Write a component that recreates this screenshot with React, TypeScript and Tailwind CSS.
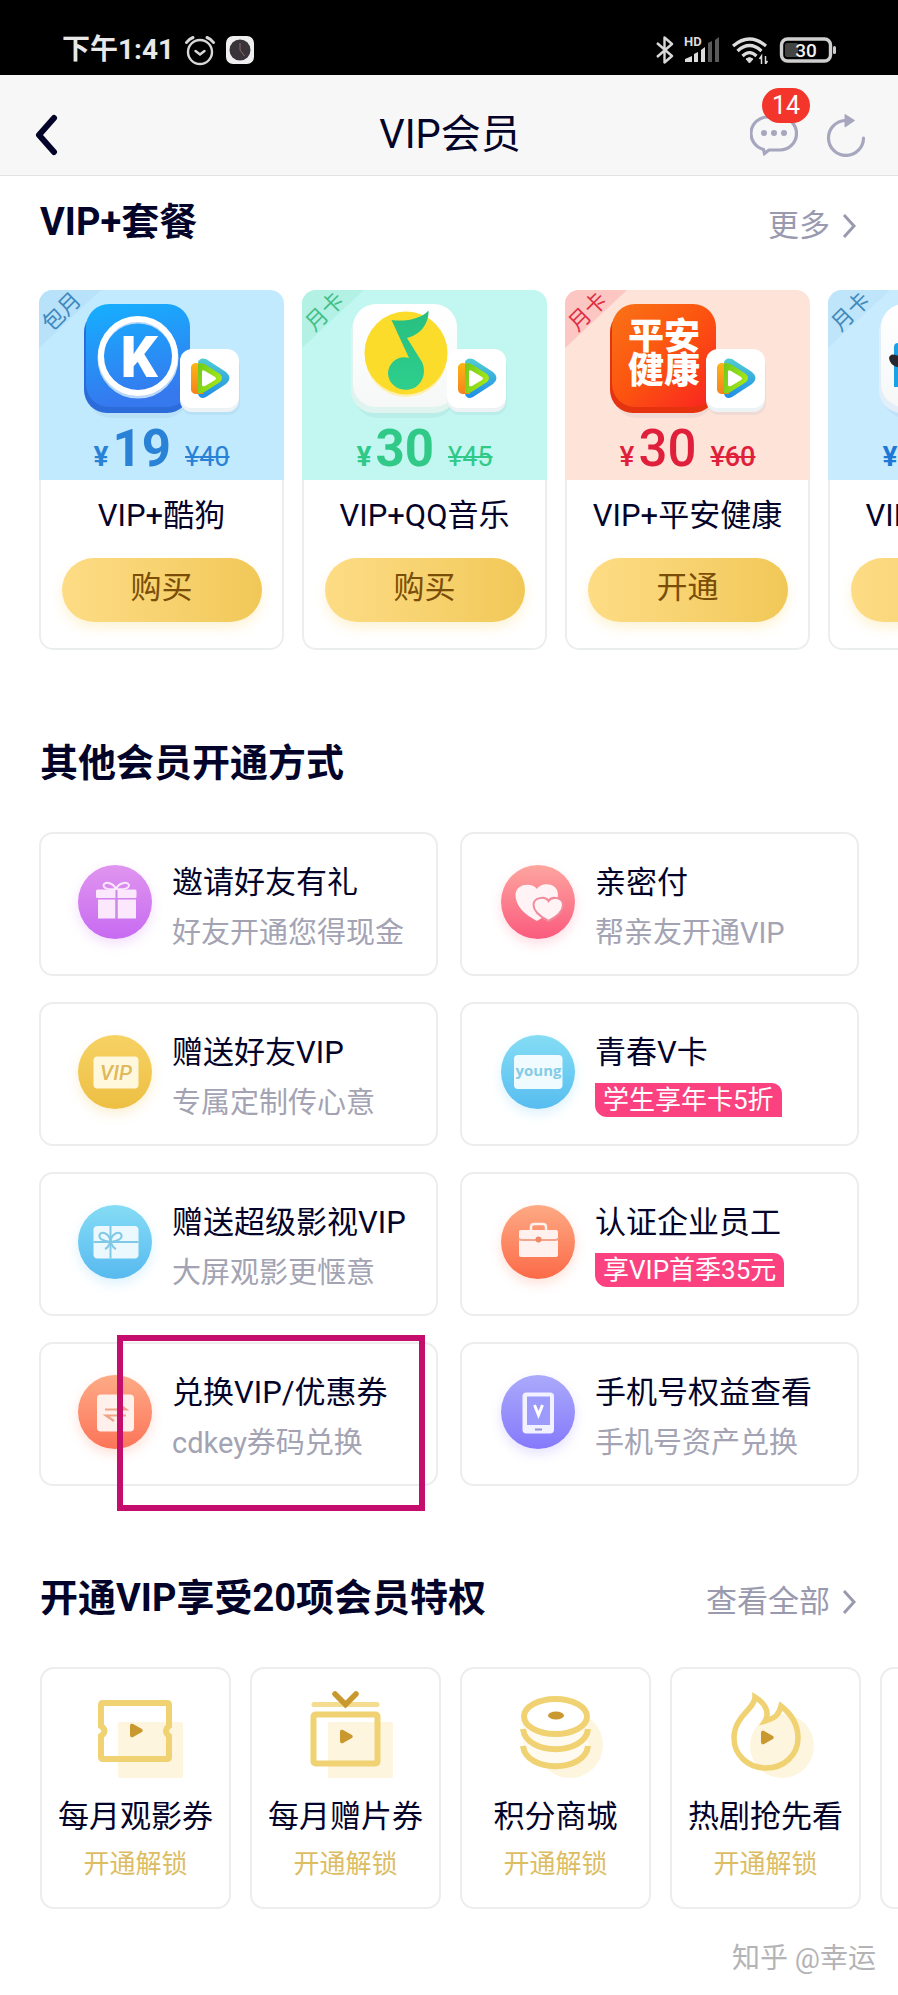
import React from "react";
import clsx from "clsx";

type Plan = {
  name: string;
  ribbon: string;
  price: string;
  oldPrice: string;
  action: string;
  tint: string;
  ribbonTint: string;
  ribbonInk: string;
  ink: string;
  weight: string;
  logo: React.ReactNode;
};

type Method = {
  title: string;
  desc?: string;
  promo?: string;
  icon: React.ReactNode;
  marked?: boolean;
};

type Privilege = { name: string; icon: React.ReactNode };

/* ---------- status bar ---------- */

function StatusBar() {
  return (
    <div className="flex h-[75px] items-center justify-between bg-black pt-6 pr-[61px] pl-[62px] text-[#e8e8e8]">
      <div className="flex items-center gap-[10px]">
        <span className="text-[28px] leading-8 font-bold">下午1:41</span>
        <svg width="32" height="32" viewBox="0 0 32 32" fill="none" stroke="#d8d8d8" strokeWidth="2.4" strokeLinecap="round">
          <circle cx="16" cy="18" r="12" />
          <path d="M11.500 17l4.500 3.500 4.500-3.500" />
          <path d="M2.500 8.500Q5 5 9 3.500M29.500 8.500Q27 5 23 3.500" strokeWidth="3" />
        </svg>
        <svg width="28" height="28" viewBox="0 0 28 28">
          <rect width="28" height="28" rx="7" fill="#efefef" />
          <circle cx="14" cy="14" r="10.5" fill="#38343a" />
          <path d="M14 7v7l4.500 6" stroke="#8a6a68" strokeWidth="1" fill="none" />
        </svg>
      </div>
      <div className="flex items-center gap-[10px]">
        <svg width="18" height="28" viewBox="0 0 18 28" fill="none" stroke="#d8d8d8" strokeWidth="2.4" strokeLinejoin="round">
          <path d="M1 7l15 13-7.500 6.500V1.500L16 8 1 21" />
        </svg>
        <svg width="37" height="28" viewBox="0 0 37 28" className="overflow-visible" fill="#dcdcdc">
          <text x="0" y="10" fontSize="13" fontWeight="700" fontFamily="Roboto">HD</text>
          <path d="M1 26v-3l7-3v6zM10 26v-8l4-2v10zM17 26V14l4-3v15z" />
          <path d="M24 26V7l4-2v21zM31 26V4l4-3v25z" fill="#5a5a5a" />
        </svg>
        <svg width="38" height="28" viewBox="0 0 38 28" fill="none" stroke="#dcdcdc" strokeWidth="3.2">
          <path d="M2 10Q18.500-4 35 10M6.500 15Q18.500 4 30.500 15M11.500 20Q18.500 13 25.500 20" />
          <path d="M15 23q3.500-3 7 0l-3.500 4z" fill="#dcdcdc" strokeWidth="1" />
          <path d="M30.500 28v-8l-2 3M34.500 20v8l2-3" strokeWidth="1.500" />
        </svg>
        <svg width="58" height="28" viewBox="0 0 58 28">
          <rect x="2.500" y="3" width="49" height="22" rx="6" fill="none" stroke="#cfcfcf" strokeWidth="3.4" />
          <rect x="6" y="7" width="13" height="14" rx="2" fill="#444" />
          <rect x="54" y="10" width="3" height="8" rx="1.500" fill="#cfcfcf" />
          <text x="27" y="20.500" fontSize="19" fontWeight="500" textAnchor="middle" fill="#f2f2f2" fontFamily="Roboto">30</text>
        </svg>
      </div>
    </div>
  );
}

function NavBar() {
  return (
    <header className="grid h-[101px] grid-cols-[1fr_auto_1fr] items-center border-b border-[#e2e2e4] bg-[#f7f7f7] pt-5 pr-8 pl-[34px]">
      <button type="button" aria-label="返回" className="justify-self-start">
        <svg width="26" height="42" viewBox="0 0 26 42" fill="none" stroke="#04042a" strokeWidth="6" strokeLinecap="round" strokeLinejoin="round">
          <path d="M20 4L5 21l15 17" />
        </svg>
      </button>
      <h1 className="text-[40px] leading-[44px]">VIP会员</h1>
      <div className="flex items-center gap-7 justify-self-end">
        <button type="button" aria-label="消息" className="relative">
          <svg width="48" height="42" viewBox="0 0 48 42" fill="none">
            <path d="M18 3h12a16.500 16.500 0 0 1 0 33H19l-4.500 3.500L13.500 35.500A16.500 16.500 0 0 1 18 3z" stroke="#a6a6be" strokeWidth="3.200" />
            <g fill="#a6a6be">
              <circle cx="14" cy="19" r="3" />
              <circle cx="24" cy="19" r="3" />
              <circle cx="34" cy="19" r="3" />
            </g>
          </svg>
          <span className="absolute -top-[26px] left-3 flex h-[35px] w-12 items-center justify-center rounded-full bg-[#f4352b] text-[25px] text-white">
            14
          </span>
        </button>
        <button type="button" aria-label="刷新">
          <svg width="40" height="44" viewBox="0 0 40 44" fill="none">
            <path d="M37.500 25A17.500 17.500 0 1 1 19 7.500" stroke="#a6a6be" strokeWidth="3.200" strokeLinecap="round" />
            <path d="M19 1.500v12.500l9.500-6.500z" fill="#a6a6be" stroke="#a6a6be" strokeLinejoin="round" />
          </svg>
        </button>
      </div>
    </header>
  );
}

function SectionHead({ title, more }: { title: string; more?: string }) {
  return (
    <div className="flex h-11 items-center justify-between px-10">
      <h2 className="text-[38px] leading-[44px] font-bold">{title}</h2>
      {more && (
        <a href="#" className="flex items-center gap-3 pt-2 text-[31px] leading-[44px] text-[#9a9aae]">
          {more}
          <svg width="16" height="26" viewBox="0 0 16 26" fill="none" stroke="currentColor" strokeWidth="3">
            <path d="M2 2l10 11L2 24" />
          </svg>
        </a>
      )}
    </div>
  );
}

/* ---------- package cards ---------- */

// Rounded app tile plus the small video badge that overlaps its corner
function AppArt({ children, face, depth, shift = 0 }: { children: React.ReactNode; face: string; depth: string; shift?: number }) {
  return (
    <svg width="156" height="116" viewBox="0 0 156 116" className="overflow-visible" aria-hidden="true">
      <defs>
        <linearGradient id="kugou" x1="0" y1="0" x2="0.200" y2="1">
          <stop offset="0" stopColor="#15b0ff" />
          <stop offset="1" stopColor="#3678ee" />
        </linearGradient>
        <linearGradient id="pingan" x1="0" y1="0" x2="1" y2="1">
          <stop offset="0" stopColor="#f97316" />
          <stop offset="0.500" stopColor="#fc5310" />
          <stop offset="1" stopColor="#f92222" />
        </linearGradient>
        <linearGradient id="paper" x1="0" y1="0" x2="0" y2="1">
          <stop offset="0" stopColor="#ffffff" />
          <stop offset="1" stopColor="#f6f8f8" />
        </linearGradient>
        <linearGradient id="play-blue" x1="0" y1="0" x2="0" y2="1">
          <stop offset="0" stopColor="#52cdd2" />
          <stop offset="1" stopColor="#1e8ee8" />
        </linearGradient>
        <linearGradient id="play-orange" x1="0" y1="0" x2="0" y2="1">
          <stop offset="0" stopColor="#fdb515" />
          <stop offset="1" stopColor="#f5821e" />
        </linearGradient>
        <linearGradient id="play-green" x1="0" y1="0" x2="1" y2="0.400">
          <stop offset="0" stopColor="#6fca1c" />
          <stop offset="1" stopColor="#a5e616" />
        </linearGradient>
        <linearGradient id="note" x1="0" y1="0" x2="0" y2="1">
          <stop offset="0" stopColor="#27bf80" />
          <stop offset="1" stopColor="#2ecf8e" />
        </linearGradient>
      </defs>
      <g transform={`translate(${shift} 0)`}>
        <rect x="3" y="12" width="102" height="104" rx="24" fill="#35598b" opacity="0.060" />
        <rect x="0" y="7" width="106" height="104" rx="23" fill={depth} />
        <rect x="2" y="2" width="104" height="103" rx="23" fill={face} />
        {children}
        <rect x="97" y="53" width="59" height="60" rx="12" fill="#35598b" opacity="0.060" />
        <rect x="96" y="50" width="59" height="60" rx="12" fill="#edf3f4" />
        <rect x="96" y="47" width="59" height="59" rx="12" fill="#fff" />
        <path d="M114 60q2-5 8-3l20 13q7 6 0 12l-20 13q-6 3-8-3z" fill="url(#play-blue)" />
        <path d="M107 65q1-4 5-4l7 1v30h-7q-4 0-5-4z" fill="url(#play-orange)" />
        <path d="M114 62q4-2 8 1l14 9q4 4 0 8l-14 9q-4 3-8 2z" fill="url(#play-green)" />
        <path d="M118 70q0-3 3-1l10 6q2 1.500 0 3l-10 6q-3 1-3-1z" fill="#fff" />
      </g>
    </svg>
  );
}

const kugou = (
  <AppArt face="url(#kugou)" depth="#2b6cda">
    <circle cx="54" cy="56" r="37.500" fill="none" stroke="#b9d8fb" strokeWidth="6" />
    <circle cx="54" cy="54" r="37" fill="none" stroke="#fff" strokeWidth="6" />
    <text x="55" y="75" fontSize="58" fontWeight="900" textAnchor="middle" fill="#fff" fontFamily="Roboto">K</text>
  </AppArt>
);

const qqMusic = (
  <AppArt face="url(#paper)" depth="#dff4ef" shift={4}>
    <circle cx="55" cy="54" r="41" fill="#fdf0b2" />
    <circle cx="55" cy="51" r="41.500" fill="#fbdc2a" />
    <path
      d="M40.500 18C54 20 70 17 77.500 8.500 78 22 69 33 56 36L71 60C76 71 71 82 63 86 52 91 38 85 37 72 37 61 47 53 58 56z"
      fill="url(#note)"
    />
  </AppArt>
);

const pingan = (
  <AppArt face="url(#pingan)" depth="#e5330f">
    <g fontSize="36" fontWeight="900" fill="#fff" fontFamily="Noto Sans CJK SC">
      <text x="18" y="47">平安</text>
      <text x="18" y="81">健康</text>
    </g>
  </AppArt>
);

const qqReader = (
  <AppArt face="url(#paper)" depth="#e2eef8" shift={6}>
    <path d="M15 45q0-4 4-4h56v44H15z" fill="#1ba2e6" />
    <path d="M10 56q1-5 7-3l8 3-2 10q-12-1-13-10z" fill="#26282e" />
  </AppArt>
);

const plans: Plan[] = [
  { name: "VIP+酷狗", ribbon: "包月", price: "19", oldPrice: "40", action: "购买", tint: "bg-[#c1eafe]", ribbonTint: "#b7e2fa", ribbonInk: "text-[#3f87bd]", ink: "text-[#2a82d6]", weight: "font-bold", logo: kugou },
  { name: "VIP+QQ音乐", ribbon: "月卡", price: "30", oldPrice: "45", action: "购买", tint: "bg-[#c1f7f0]", ribbonTint: "#b4f1e5", ribbonInk: "text-[#42bf86]", ink: "text-[#30c988]", weight: "font-bold", logo: qqMusic },
  { name: "VIP+平安健康", ribbon: "月卡", price: "30", oldPrice: "60", action: "开通", tint: "bg-[#fee3d9]", ribbonTint: "#fcc6c2", ribbonInk: "text-[#dd3044]", ink: "text-[#e01f3a]", weight: "font-medium", logo: pingan },
  { name: "VIP+QQ阅读", ribbon: "月卡", price: "30", oldPrice: "45", action: "购买", tint: "bg-[#c9ebfe]", ribbonTint: "#bfe5fb", ribbonInk: "text-[#4089bb]", ink: "text-[#1d78d8]", weight: "font-bold", logo: qqReader },
];

function PlanCard({ plan }: { plan: Plan }) {
  return (
    <article className="relative h-[360px] w-[245px] shrink-0 overflow-hidden rounded-[14px] bg-white">
      <div className={clsx("flex h-[190px] flex-col items-center pt-3", plan.tint, plan.ink)}>
        <svg className="absolute top-0 left-0" width="62" height="58" viewBox="0 0 62 58">
          <path d="M0 0h62L0 58z" fill={plan.ribbonTint} />
        </svg>
        <span className={clsx("absolute top-3 left-px -rotate-45 text-[22px] leading-5", plan.ribbonInk)}>{plan.ribbon}</span>
        {plan.logo}
        <p className={clsx("mt-[6px] flex items-baseline text-[51px] leading-[50px]", plan.weight)}>
          <span className="mr-1 text-[28px]">¥</span>
          {plan.price}
          <s className={clsx("ml-[14px] text-[27px]", plan.weight === "font-medium" ? "font-medium" : "font-normal")}>
            ¥{plan.oldPrice}
          </s>
        </p>
      </div>
      <div className="flex h-[170px] flex-col items-center rounded-b-[14px] border-2 border-t-0 border-[#ebeeef] pt-[14px]">
        <h3 className="text-[31px] leading-[44px] whitespace-nowrap">{plan.name}</h3>
        <button
          type="button"
          className="mt-5 h-16 w-[200px] rounded-full bg-linear-to-r from-[#fddc85] to-[#f1c857] pb-1 text-[31px] leading-[44px] text-[#7a4e08] shadow-[0_6px_12px_rgba(250,215,120,0.3)]"
        >
          {plan.action}
        </button>
      </div>
    </article>
  );
}

/* ---------- other ways to subscribe ---------- */

function Disc({ id, from, to, glow, children }: { id: string; from: string; to: string; glow: string; children: React.ReactNode }) {
  return (
    <span className={clsx("shrink-0 rounded-full", glow)}>
      <svg width="74" height="74" viewBox="0 0 74 74" aria-hidden="true">
        <defs>
          <linearGradient id={id} x1="0" y1="0" x2="0" y2="1">
            <stop offset="0" stopColor={from} />
            <stop offset="1" stopColor={to} />
          </linearGradient>
        </defs>
        <circle cx="37" cy="37" r="37" fill={`url(#${id})`} />
        {children}
      </svg>
    </span>
  );
}

const methods: Method[] = [
  {
    title: "邀请好友有礼",
    desc: "好友开通您得现金",
    icon: (
      <Disc id="d-gift" from="#e095ee" to="#c76af2" glow="shadow-[0_5px_12px_rgba(200,110,240,0.22)]">
        <g fill="#fbe8fd">
          <rect x="18" y="24.500" width="40.500" height="8.500" rx="1.500" />
          <path d="M20 34.500h17.500v19H20zM39.500 34.500h18.500v19H39.500z" />
        </g>
        <path d="M38 24q-12 1-12.500-3.500c0-4 9-4 12.500 3.500 3.500-7.500 13-7.500 13-3.500Q50.500 25 38 24z" fill="none" stroke="#fbe8fd" strokeWidth="2" />
        <path d="M38.500 25v28.500" stroke="#c98ae0" strokeWidth="2" />
      </Disc>
    ),
  },
  {
    title: "亲密付",
    desc: "帮亲友开通VIP",
    icon: (
      <Disc id="d-heart" from="#fda59f" to="#fb5a7d" glow="shadow-[0_5px_12px_rgba(250,100,130,0.22)]">
        <path d="M36 24c4-7 21-7 21 6 0 10-10 20-21 26C24 50 14.500 41 14.500 30c0-12 17-13 21.500-6z" fill="#fff3f5" />
        <path d="M47.500 36c3-5 14.500-4 14.500 4 0 7-7 12-14.500 16C40 52 32.500 47 32.500 40c0-8 12-9 15-4z" fill="#fff3f5" stroke="#f08a9c" strokeWidth="2" />
      </Disc>
    ),
  },
  {
    title: "赠送好友VIP",
    desc: "专属定制传心意",
    icon: (
      <Disc id="d-vip" from="#f6d264" to="#edbf43" glow="shadow-[0_5px_12px_rgba(240,195,80,0.25)]">
        <rect x="15.500" y="21.500" width="45" height="32" rx="4" fill="#fff8dd" />
        <text x="38" y="45" fontSize="21" fontWeight="500" fontStyle="italic" textAnchor="middle" fill="#dfb95c" fontFamily="Roboto">VIP</text>
      </Disc>
    ),
  },
  {
    title: "青春V卡",
    promo: "学生享年卡5折",
    icon: (
      <Disc id="d-young" from="#84ddf4" to="#57bdf0" glow="shadow-[0_5px_12px_rgba(95,195,240,0.22)]">
        <rect x="13" y="20" width="48.500" height="34" rx="4" fill="#effbff" />
        <text x="37.500" y="41" fontSize="15" fontWeight="700" textAnchor="middle" fill="#84cbe5" fontFamily="Open Sans">young</text>
      </Disc>
    ),
  },
  {
    title: "赠送超级影视VIP",
    desc: "大屏观影更惬意",
    icon: (
      <Disc id="d-box" from="#85dcf5" to="#57b9ef" glow="shadow-[0_5px_12px_rgba(95,195,240,0.22)]">
        <rect x="15.500" y="21" width="45" height="32.500" rx="4" fill="#ebf9fe" />
        <g fill="none" stroke="#80c9e6" strokeWidth="2">
          <path d="M32.500 21v32.500M15.500 37h45" />
          <path d="M32.500 37c-7-1-12-3-11-7s10-3 11 7zM32.500 37c7-1 12-3 11-7s-10-3-11 7zM32 37q-1 5-5 7M33 37q1 5 5 7" />
        </g>
      </Disc>
    ),
  },
  {
    title: "认证企业员工",
    promo: "享VIP首季35元",
    icon: (
      <Disc id="d-case" from="#fdaa84" to="#fc6a48" glow="shadow-[0_5px_12px_rgba(250,120,80,0.22)]">
        <path d="M30 26v-4q0-3 3-3h9q3 0 3 3v4" fill="none" stroke="#fff1ed" strokeWidth="2.500" />
        <rect x="18" y="25" width="39" height="27" rx="2" fill="#fff1ed" />
        <path d="M18 33q0 2 3 2h33q3 0 3-2" fill="none" stroke="#f3a48a" strokeWidth="2" />
        <circle cx="37.500" cy="34.500" r="3" fill="#ee8868" />
      </Disc>
    ),
  },
  {
    title: "兑换VIP/优惠券",
    desc: "cdkey券码兑换",
    marked: true,
    icon: (
      <Disc id="d-swap" from="#fdab87" to="#fc7458" glow="shadow-[0_5px_12px_rgba(250,120,80,0.22)]">
        <rect x="19" y="19.500" width="37" height="37" rx="4" fill="#fff0eb" />
        <path d="M27 34.500h21l-6-4.500M48 40.500H28l8 5.500" fill="none" stroke="#f2a286" strokeWidth="2.200" />
      </Disc>
    ),
  },
  {
    title: "手机号权益查看",
    desc: "手机号资产兑换",
    icon: (
      <Disc id="d-phone" from="#aaaafb" to="#8579fb" glow="shadow-[0_5px_12px_rgba(135,125,250,0.22)]">
        <rect x="21.500" y="17.500" width="31.500" height="41" rx="4" fill="#f1f1ff" />
        <rect x="26" y="21.500" width="23" height="28.500" fill="#9c9afb" />
        <path d="M33.500 30l4 10 4-10" fill="none" stroke="#fff" strokeWidth="3" />
        <path d="M34 54.500h7" stroke="#9693d8" strokeWidth="2" />
      </Disc>
    ),
  },
];

function MethodCard({ method }: { method: Method }) {
  return (
    <a
      href="#"
      className="relative flex h-36 items-center gap-5 rounded-[14px] border-2 border-[#ededed] bg-white pb-1 pl-[37px] even:pl-[39px]"
    >
      {method.icon}
      <span className="flex flex-col items-start pt-[10px]">
        <span className="text-[31px] leading-[44px] whitespace-nowrap">{method.title}</span>
        {method.desc && <span className="mt-2 text-[29px] leading-10 whitespace-nowrap text-[#a3a3b3]">{method.desc}</span>}
        {method.promo && (
          <span className="mt-2 mb-[6px] rounded-tr-[10px] rounded-bl-[12px] bg-[#fb417f] px-2 text-[26px] leading-[34px] whitespace-nowrap text-white">
            {method.promo}
          </span>
        )}
      </span>
      {method.marked && (
        <span className="pointer-events-none absolute -top-[9px] left-[76px] h-44 w-[308px] border-[6px] border-[#c40d6c]" />
      )}
    </a>
  );
}

/* ---------- privileges ---------- */

const GOLD = "#f0d272";
const DARK_GOLD = "#c9982f";
const PALE = "#fdf5de";

function Play({ x, y }: { x: number; y: number }) {
  return (
    <path
      transform={`translate(${x} ${y})`}
      d="M2 3q0-2 2-1l8 4.500q1.500 1 0 2L4 13q-2 1-2-1z"
      fill={DARK_GOLD}
      stroke={DARK_GOLD}
      strokeWidth="2"
      strokeLinejoin="round"
    />
  );
}

const privileges: Privilege[] = [
  {
    name: "每月观影券",
    icon: (
      <>
        <rect x="32" y="37" width="65" height="56" rx="2" fill={PALE} />
        <path
          d="M17 18h64q2 0 2 2v21q-6 5 0 10v21q0 2-2 2H17q-2 0-2-2V51q7-5 0-10V20q0-2 2-2z"
          fill="none"
          stroke={GOLD}
          strokeWidth="6"
        />
        <Play x={43} y={38} />
      </>
    ),
  },
  {
    name: "每月赠片券",
    icon: (
      <>
        <rect x="32" y="37" width="65" height="56" rx="2" fill={PALE} />
        <path d="M18 19.500h63" stroke="#f4dc90" strokeWidth="5" strokeLinecap="round" />
        <rect x="17.500" y="29.500" width="64" height="49" rx="2" fill="none" stroke={GOLD} strokeWidth="6" />
        <path d="M39 9l10.500 10.500L60 9" fill="none" stroke={DARK_GOLD} strokeWidth="5.500" strokeLinecap="round" />
        <Play x={43} y={44} />
      </>
    ),
  },
  {
    name: "积分商城",
    icon: (
      <>
        <circle cx="64" cy="60" r="33" fill={PALE} />
        <path d="M17 60C19 88 80 88 82 60V32H17z" fill="#fffaf0" />
        <path d="M17 44C20 71 79 71 82 44M17 61C20 88 79 88 82 61" fill="none" stroke={GOLD} strokeWidth="6" />
        <ellipse cx="49.500" cy="31.500" rx="31.500" ry="17.500" fill="#fff" stroke={GOLD} strokeWidth="6" />
        <ellipse cx="50" cy="30.500" rx="8" ry="4" fill={DARK_GOLD} />
      </>
    ),
  },
  {
    name: "热剧抢先看",
    icon: (
      <>
        <circle cx="66" cy="61" r="32" fill={PALE} />
        <path
          d="M39 12C39 24 18 31 18 53 18 70 32 83 50 83 68 83 82 70 82 53 82 39 74 28 65 21 63 29 60 33 49 36 55 26 47 17 39 12z"
          fill="none"
          stroke={GOLD}
          strokeWidth="5.500"
        />
        <Play x={44} y={45} />
      </>
    ),
  },
  { name: "专属标识", icon: null },
];

function PrivilegeCard({ privilege }: { privilege: Privilege }) {
  return (
    <article className="flex h-[242px] w-[191px] shrink-0 flex-col items-center rounded-[14px] border-2 border-[#ededed] bg-white pt-4">
      <svg width="100" height="100" viewBox="0 0 100 100" aria-hidden="true">
        {privilege.icon}
      </svg>
      <h3 className="mt-[10px] text-[31px] leading-[44px] whitespace-nowrap">{privilege.name}</h3>
      <button type="button" className="mt-2 text-[26px] leading-[34px] text-[#dcbd64]">
        开通解锁
      </button>
    </article>
  );
}

export default function App() {
  return (
    <div className="min-h-screen bg-white font-['Roboto','Noto_Sans_CJK_SC',sans-serif] text-[#04042a]">
      <StatusBar />
      <NavBar />
      <main className="pt-6">
        <section>
          <SectionHead title="VIP+套餐" more="更多" />
          <div className="mt-[46px] flex gap-[18px] overflow-x-auto px-[39px] [scrollbar-width:none]">
            {plans.map((plan) => (
              <PlanCard key={plan.name} plan={plan} />
            ))}
          </div>
        </section>

        <section className="mt-[91px]">
          <SectionHead title="其他会员开通方式" />
          <div className="mt-[47px] grid grid-cols-2 gap-x-[22px] gap-y-[26px] px-[39px]">
            {methods.map((method) => (
              <MethodCard key={method.title} method={method} />
            ))}
          </div>
        </section>

        <section className="mt-[90px]">
          <SectionHead title="开通VIP享受20项会员特权" more="查看全部" />
          <div className="mt-[47px] flex gap-[19px] overflow-x-auto px-10 [scrollbar-width:none]">
            {privileges.map((privilege) => (
              <PrivilegeCard key={privilege.name} privilege={privilege} />
            ))}
          </div>
        </section>
      </main>
      <footer className="mt-8 pr-[22px] text-right text-[28px] leading-9 text-[#b4b4b6]">知乎 @幸运</footer>
    </div>
  );
}
